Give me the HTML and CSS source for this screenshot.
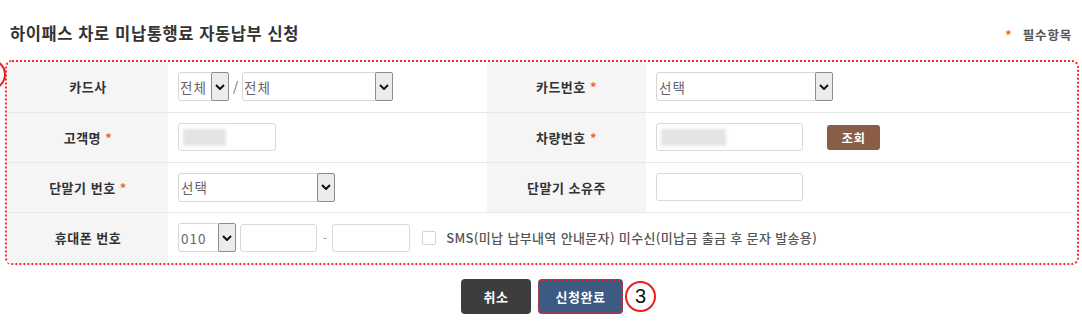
FILE: index.html
```html
<!DOCTYPE html>
<html lang="ko">
<head>
    <meta charset="UTF-8">
    <meta name="viewport" content="width=device-width, initial-scale=1.0">
    <title>하이패스 미납통행료 자동납부 신청</title>
    <link rel="stylesheet" href="styles.css">
</head>
<body>
    <div class="page">
        <div class="head">
            <h2 class="title">하이패스 차로 미납통행료 자동납부 신청</h2>
            <p class="req"><span class="star">*</span> 필수항목</p>
        </div>

        <div class="box">
            <span class="mark mark-left"></span>
            <table class="form">
                <colgroup>
                    <col class="c1"><col class="c2"><col class="c3"><col class="c4">
                </colgroup>
                <tr>
                    <th>카드사</th>
                    <td>
                        <div class="line">
                            <div class="sel w51"><span>전체</span><i class="arr"><svg viewBox="0 0 10 6"><path d="M1 1l4 4 4-4"/></svg></i></div>
                            <span class="slash">/</span>
                            <div class="sel w151"><span>전체</span><i class="arr"><svg viewBox="0 0 10 6"><path d="M1 1l4 4 4-4"/></svg></i></div>
                        </div>
                    </td>
                    <th>카드번호 <span class="star">*</span></th>
                    <td>
                        <div class="sel w177"><span class="pad">선택</span><i class="arr"><svg viewBox="0 0 10 6"><path d="M1 1l4 4 4-4"/></svg></i></div>
                    </td>
                </tr>
                <tr>
                    <th>고객명 <span class="star">*</span></th>
                    <td><div class="inp w98"><span class="blur"></span></div></td>
                    <th>차량번호 <span class="star">*</span></th>
                    <td>
                        <div class="line">
                            <div class="inp w147"><span class="blur wide"></span></div>
                            <button class="btn-find">조회</button>
                        </div>
                    </td>
                </tr>
                <tr>
                    <th>단말기 번호 <span class="star">*</span></th>
                    <td>
                        <div class="sel w157"><span class="pad">선택</span><i class="arr"><svg viewBox="0 0 10 6"><path d="M1 1l4 4 4-4"/></svg></i></div>
                    </td>
                    <th>단말기 소유주</th>
                    <td><div class="inp w147"></div></td>
                </tr>
                <tr class="last">
                    <th>휴대폰 번호</th>
                    <td colspan="3">
                        <div class="line">
                            <div class="sel w58"><span class="pad">010</span><i class="arr"><svg viewBox="0 0 10 6"><path d="M1 1l4 4 4-4"/></svg></i></div>
                            <div class="inp w77 ml4"></div>
                            <span class="dash">-</span>
                            <div class="inp w78"></div>
                            <label class="chk"><span class="box-chk"></span>SMS(미납 납부내역 안내문자) 미수신(미납금 출금 후 문자 발송용)</label>
                        </div>
                    </td>
                </tr>
            </table>
        </div>

        <div class="btns">
            <button class="btn btn-cancel">취소</button>
            <span class="submit-wrap">
                <button class="btn btn-ok">신청완료</button>
                <span class="mark mark-num">3</span>
            </span>
        </div>
    </div>
</body>
</html>
```

FILE: styles.css
```css
*{
    margin: 0;
    padding: 0;
    box-sizing: border-box;
    font-family: "Noto Sans CJK KR", "Noto Sans", sans-serif;
}

body{
    background: #fff;
    color: #333;
    overflow: hidden;
}

.page{
    width: 1082px;
    padding-top: 20px;
}

.head{
    display: flex;
    align-items: center;
    justify-content: space-between;
    height: 26px;
    padding: 0 10px 0 10px;
}

.title{
    font-size: 16.5px;
    font-weight: 700;
    color: #333;
    letter-spacing: 0.6px;
}

.req{
    font-size: 12.5px;
    font-weight: 700;
    color: #555;
    padding-top: 2px;
    letter-spacing: 0.8px;
}

.req .star{
    margin-right: 6px;
}

.star{
    color: #f26b1d;
    font-weight: 700;
}

.box{
    position: relative;
    margin: 14px 0 0 5px;
    width: 1074px;
    border: 2px dotted #f52b2b;
    border-radius: 7px;
    padding: 0 4px 0 1px;
}

.form{
    width: 1064px;
    border-collapse: collapse;
    table-layout: fixed;
}

.c1{ width: 160px; }
.c2{ width: 319px; }
.c3{ width: 159px; }
.c4{ width: 426px; }

.form th{
    background: #f5f5f5;
    font-size: 13px;
    font-weight: 700;
    color: #333;
    letter-spacing: 0.5px;
    text-align: center;
    height: 50px;
    border-bottom: 1px solid #e6e6e6;
}

.form td{
    padding-left: 10px;
    height: 50px;
    border-bottom: 1px solid #e6e6e6;
}

.form tr.last th,
.form tr.last td{
    border-bottom: 0;
    height: 51px;
}

.line{
    display: flex;
    align-items: center;
}

.sel{
    display: flex;
    align-items: stretch;
    justify-content: space-between;
    height: 29px;
    border: 1px solid #d6d6d6;
    border-radius: 3px;
    background: #fff;
    font-size: 13.5px;
    letter-spacing: 1px;
    color: #666;
}

.sel span{
    display: flex;
    align-items: center;
    padding-left: 1px;
}

.sel span.pad{
    padding-left: 2px;
}

.arr{
    width: 18px;
    border: 1px solid #8c8c8c;
    border-radius: 2px;
    background: #ececec;
    display: flex;
    align-items: center;
    justify-content: center;
    margin: -1px -1px -1px 0;
}

.arr svg{
    width: 10px;
    height: 6px;
    fill: none;
    stroke: #111;
    stroke-width: 2;
}

.w51{ width: 51px; }
.w58{ width: 58px; }
.w77{ width: 77px; }
.w78{ width: 78px; }
.w98{ width: 98px; }
.w147{ width: 147px; }
.w151{ width: 151px; }
.w157{ width: 157px; }
.w177{ width: 177px; }
.ml4{ margin-left: 4px; }

.slash{
    font-size: 13px;
    color: #666;
    margin: 0 4px 0 4px;
}

.inp{
    display: flex;
    align-items: center;
    height: 28px;
    border: 1px solid #d9d9d9;
    border-radius: 3px;
    background: #fff;
    padding-left: 4px;
}

.blur{
    width: 43px;
    height: 17px;
    background: #e4e4e4;
    filter: blur(1.5px);
}

.blur.wide{
    width: 65px;
}

.btn-find{
    margin-left: 24px;
    width: 53px;
    height: 25px;
    border: 0;
    border-radius: 3px;
    background: #8a5d46;
    color: #fff;
    font-size: 12.5px;
    font-weight: 700;
    letter-spacing: 0.5px;
}

.dash{
    font-size: 12px;
    color: #999;
    margin: 0 5px 0 6px;
}

.chk{
    display: flex;
    align-items: center;
    margin-left: 12px;
    font-size: 13px;
    letter-spacing: 0.35px;
    font-weight: 500;
    color: #555;
}

.box-chk{
    width: 14px;
    height: 14px;
    border: 1px solid #d4d4d4;
    border-radius: 2px;
    background: #fff;
    margin-right: 10px;
}

.btns{
    display: flex;
    justify-content: center;
    gap: 7px;
    margin-top: 14px;
    padding-left: 2px;
}

.btn{
    height: 35px;
    border: 0;
    border-radius: 4px;
    color: #fff;
    font-size: 13px;
    font-weight: 700;
    letter-spacing: 0.5px;
}

.btn-cancel{
    width: 70px;
    background: #3d3d3d;
}

.submit-wrap{
    position: relative;
    display: flex;
}

.btn-ok{
    width: 85px;
    background: #3c5a82;
    border: 2px dotted #e8202a;
}

.mark{
    position: absolute;
    width: 31px;
    height: 31px;
    border: 2px solid #ee1c1c;
    border-radius: 50%;
    background: #fff;
}

.mark-left{
    left: -32px;
    top: -3px;
    background: transparent;
}

.mark-num{
    left: 87px;
    top: 2px;
    display: flex;
    align-items: center;
    justify-content: center;
    font-size: 20px;
    color: #111;
    font-family: "Liberation Sans", sans-serif;
}
```
